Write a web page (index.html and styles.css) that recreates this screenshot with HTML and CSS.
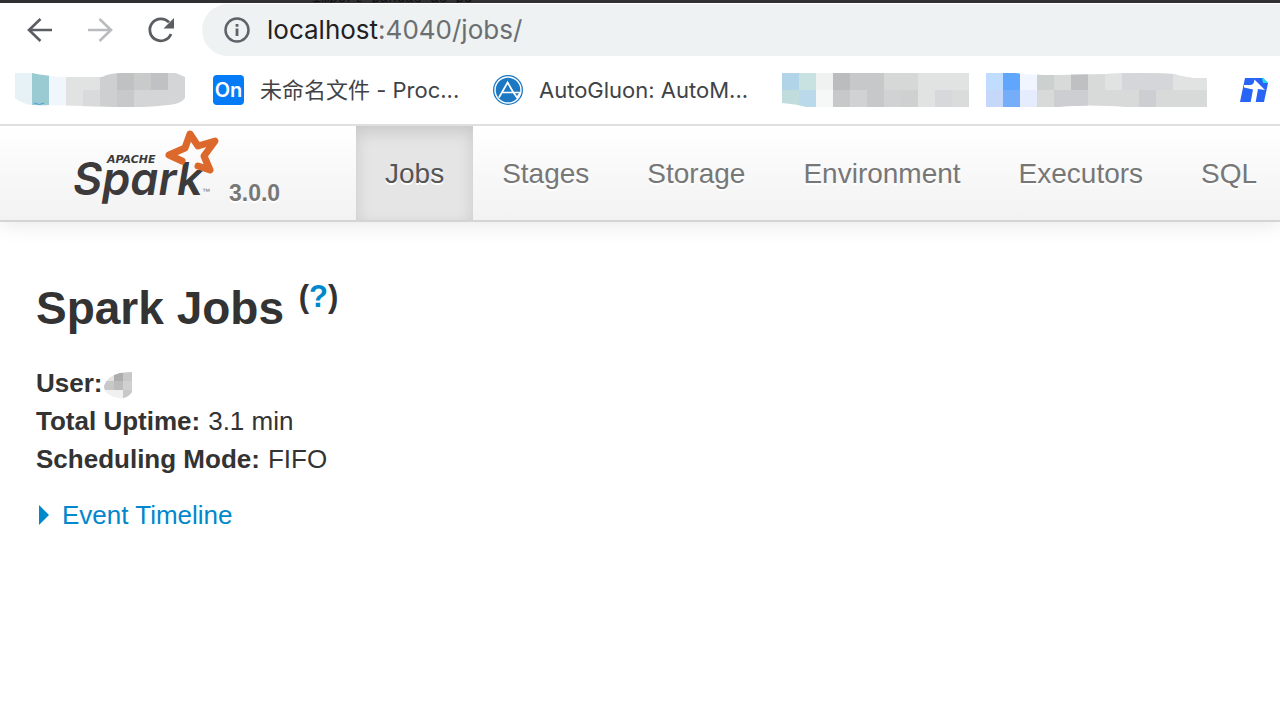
FILE: index.html
```html
<!DOCTYPE html>
<html lang="en">
<head>
<meta charset="utf-8">
<title>Spark Jobs</title>
<link rel="stylesheet" href="styles.css">
</head>
<body>
<div class="backdrop"><span>import</span> pandas as pd</div>
<header class="browser">
  <div class="toolbar">
    <button class="tool" aria-label="Back"><svg width="32" height="32" viewBox="0 0 32 32"><path d="M28 16H5M16.500 5 5 16l11.500 11" fill="none" stroke="#5a5e63" stroke-width="2.600"/></svg></button>
    <button class="tool" aria-label="Forward"><svg width="32" height="32" viewBox="0 0 32 32"><path d="M4 16h23M15.500 5 27 16 15.500 27" fill="none" stroke="#b9bbbe" stroke-width="2.600"/></svg></button>
    <button class="tool" aria-label="Reload"><svg width="32" height="32" viewBox="0 0 32 32"><path d="M27 20A11 11 0 1 1 25 8.400" fill="none" stroke="#5a5e63" stroke-width="2.800"/><path d="M30 4v10.500H19.500z" fill="#5a5e63"/></svg></button>
    <div class="address">
      <svg width="28" height="28" viewBox="0 0 28 28"><circle cx="14" cy="14" r="11.500" fill="none" stroke="#5f6368" stroke-width="2.500"/><path d="M14 12.500V20M14 8v2.800" stroke="#5f6368" stroke-width="2.800"/></svg>
      <div class="url" role="textbox" aria-label="Address" contenteditable="true" spellcheck="false"><span class="host">localhost</span>:4040/jobs/</div>
    </div>
  </div>
  <nav class="bookmarks" aria-label="Bookmarks">
    <a class="bookmark hidden-one" href="#" aria-label="Bookmark">
      <svg width="170" height="34" viewBox="0 0 170 34"><defs><clipPath id="m1"><path d="M0 0h17q14 3 34 4h36q8-4 19-4h55l9 4v21q-4 6-17 7-24 3-53 2l-66-2q-25 2-34-7z"/></clipPath></defs><g clip-path="url(#m1)"><path fill="#e6f2f5" d="M0 0h17v34H0z"/><path fill="#9acbd3" d="M17 0h17v34H17z"/><path fill="#f0f6fc" d="M34 0h17v34H34z"/><path fill="#e1e3e3" d="M51 0h34v34H51z"/><path fill="#d8dadb" d="M68 17h17v17H68z"/><path fill="#cecfd0" d="M85 0h17v34H85z"/><path fill="#c0c1c3" d="M102 0h17v17h-17z"/><path fill="#c8c9cb" d="M102 17h17v17h-17z"/><path fill="#c9cbcb" d="M119 0h17v17h-17z"/><path fill="#d4d5d6" d="M119 17h51v17h-51zM153 0h17v17h-17z"/><path fill="#c0c1c3" d="M136 0h17v17h-17z"/></g><path d="M19 30q6 3 10 0" stroke="#4c9ed5" fill="none"/></svg>
    </a>
    <a class="bookmark procession" href="#">
      <span class="on-icon">On</span><span>未命名文件 - Proc...</span>
    </a>
    <a class="bookmark gluon" href="#">
      <svg width="32" height="32" viewBox="0 0 32 32"><circle cx="16" cy="16" r="15" fill="#1c78c3"/><circle cx="16" cy="16" r="13" fill="none" stroke="#fff" stroke-width="1.400"/><path d="m7 23.500 8.600-15 5.800 10M10.500 18.500H29M21.400 18.500l3.600 5 3.500-5" fill="none" stroke="#fff" stroke-width="1.700"/></svg><span>AutoGluon: AutoM...</span>
    </a>
    <a class="bookmark grey-one" href="#" aria-label="Bookmark">
      <svg width="187" height="34" viewBox="0 0 187 34"><defs><clipPath id="m2"><path d="M0 0h187v34H24Q14 31 0 30z"/></clipPath></defs><g clip-path="url(#m2)"><path fill="#b1d4e8" d="M0 0h17v17H0z"/><path fill="#c8e1e1" d="M17 0h17v17H17z"/><path fill="#c0dcdd" d="M0 17h17v17H0z"/><path fill="#badaeb" d="M17 17h17v17H17z"/><path fill="#eff2f1" d="M34 0h17v17H34z"/><path fill="#f5f8f7" d="M34 17h17v17H34z"/><path fill="#bbbcbe" d="M51 0h17v17H51z"/><path fill="#c7c8ca" d="M51 17h17v17H51zM68 0h17v17H68zM85 0h17v34H85z"/><path fill="#d1d2d4" d="M68 17h17v17H68zM102 17h17v17h-17z"/><path fill="#d6d8d8" d="M102 0h34v17h-34z"/><path fill="#cfd1d1" d="M119 17h17v17h-17z"/><path fill="#e1e3e3" d="M136 0h51v17h-51zM136 17h17v17h-17z"/><path fill="#d7d8dc" d="M153 17h17v17h-17z"/><path fill="#d9dcdb" d="M170 17h17v17h-17z"/></g></svg>
    </a>
    <a class="bookmark blue-one" href="#" aria-label="Bookmark">
      <svg width="221" height="34" viewBox="0 0 221 34"><defs><clipPath id="m3"><path d="M0 0h30q12 2 40 2l50-1q35-2 68 0 13 5 33 4v29H140q-40-3-68 0H0z"/></clipPath></defs><g clip-path="url(#m3)"><path fill="#c0dcff" d="M0 0h17v17H0z"/><path fill="#c6d8f9" d="M0 17h17v17H0z"/><path fill="#60a6fc" d="M17 0h17v17H17z"/><path fill="#75adf8" d="M17 17h17v17H17z"/><path fill="#f0f5ff" d="M34 0h17v17H34z"/><path fill="#e5ecfd" d="M34 17h17v17H34z"/><path fill="#d8dada" d="M51 0h170v34H51z"/><path fill="#ccd0cf" d="M51 0h17v17H51z"/><path fill="#bfc0c2" d="M85 0h17v17H85z"/><path fill="#cdced1" d="M68 17h34v17H68zM153 17h17v17h-17z"/><path fill="#e0e3e2" d="M119 0h17v17h-17zM187 0h34v17h-34z"/><path fill="#d5d6d9" d="M136 0h51v17h-51z"/></g></svg>
    </a>
    <a class="bookmark last-one" href="#" aria-label="Documents">
      <svg width="30" height="28" viewBox="0 0 30 28"><path d="M6 2h18l5 5-4 19H1z" fill="#2864f5"/><path d="M23 2h1l5 5h-5z" fill="#1de1ef"/><path d="M15.500 3.500 26 14l-7-1-2.500 14h-5L14 13.500 5 11.500V9h6q4 0 4.500-5.500z" fill="#fff"/></svg>
    </a>
  </nav>
</header>
<nav class="navbar" aria-label="Spark">
  <a class="brand" href="#">
    <svg width="148" height="80" viewBox="0 0 148 80" role="img" aria-label="Apache Spark">
      <text class="logo-word" x="0" y="67">Spark</text>
      <path d="M109 33 96 27 112 20 117 6 125 18 142 13 131 28 137 42 125 38" fill="none" stroke="#dc692b" stroke-width="7" stroke-linecap="round" stroke-linejoin="round"/>
      <text class="logo-top" x="34" y="35">APACHE</text>
      <text class="logo-mark" x="129" y="66">™</text>
    </svg>
    <span class="version">3.0.0</span>
  </a>
  <a class="tab active" href="#">Jobs</a>
  <a class="tab" href="#">Stages</a>
  <a class="tab" href="#">Storage</a>
  <a class="tab" href="#">Environment</a>
  <a class="tab" href="#">Executors</a>
  <a class="tab" href="#">SQL</a>
</nav>
<main class="content">
  <h1>Spark Jobs <sup>(<a href="#">?</a>)</sup></h1>
  <ul class="summary">
    <li><strong>User:</strong><svg class="user" width="29" height="28" viewBox="0 0 29 28"><defs><clipPath id="m4"><path d="M29 1v20q-5 7-12 6Q1 24 1 15 4 5 17 2z"/></clipPath></defs><g clip-path="url(#m4)"><path fill="#e3e3e3" d="M0 0h29v28H0z"/><path fill="#adadad" d="M11 0h9v10h-9z"/><path fill="#c8c8c8" d="M20 0h9v10h-9zM0 10h11v9H0zM20 19h9v9h-9z"/><path fill="#bcbcbc" d="M11 10h9v9h-9z"/><path fill="#d0d0d0" d="M20 10h9v9h-9z"/><path fill="#f0f0f0" d="M0 19h20v9H0z"/></g></svg></li>
    <li><strong>Total Uptime:</strong> 3.1 min</li>
    <li><strong>Scheduling Mode:</strong> FIFO</li>
  </ul>
  <a class="timeline" href="#"><svg width="11" height="20" viewBox="0 0 11 20"><path d="M1 0 11 10 1 20z" fill="#0088cc"/></svg>Event Timeline</a>
</main>
</body>
</html>
```
FILE: styles.css
```css
* { box-sizing: border-box; }
body {
  margin: 0;
  background: #fff;
  color: #333;
  font: 26px/38px "Liberation Sans", Arial, sans-serif;
  overflow-x: hidden;
}
a { color: #0088cc; text-decoration: none; }
svg { display: block; flex: none; }
.backdrop {
  display: flex;
  align-items: flex-end;
  gap: 8px;
  height: 3px;
  padding-left: 313px;
  overflow: hidden;
  background: #302f32;
  color: #111;
  font: 14px/9px "Liberation Mono", monospace;
}
.backdrop span { font-style: italic; }
.browser {
  position: relative;
  z-index: 1;
  border-bottom: 2px solid #dfdfdf;
  background: #fff;
}
.toolbar {
  display: flex;
  align-items: center;
  gap: 28px;
  height: 53px;
  padding-left: 24px;
}
.tool { padding: 0; border: 0; background: none; }
.address {
  display: flex;
  flex: 1;
  align-items: center;
  gap: 16px;
  height: 52px;
  margin-left: -2px;
  padding-left: 21px;
  border-radius: 26px 0 0 26px;
  background: #eef2f3;
}
.url {
  color: #6b6e70;
  font: 26px/40px Inter, sans-serif;
  white-space: nowrap;
  outline: 0;
}
.host { color: #1f2124; }
.bookmarks {
  display: flex;
  align-items: center;
  height: 68px;
  padding-left: 15px;
}
.bookmark {
  display: flex;
  flex: none;
  align-items: center;
  color: #3f4347;
  font: 22px/32px Inter, "Noto Sans CJK SC", sans-serif;
  white-space: nowrap;
}
.hidden-one { width: 198px; }
.procession { width: 279px; gap: 16px; }
.gluon { width: 290px; gap: 15px; }
.grey-one { width: 204px; }
.blue-one { width: 253px; }
.on-icon {
  width: 31px;
  height: 30px;
  border-radius: 4px;
  background: #057bf5;
  color: #fff;
  font: 600 20px/31px Inter, sans-serif;
  text-align: center;
}
.navbar {
  display: flex;
  height: 96px;
  border-bottom: 2px solid #d4d4d4;
  background: linear-gradient(#fff, #f2f2f2);
  box-shadow: 0 2px 20px rgba(0, 0, 0, 0.1);
}
.brand {
  display: flex;
  flex: none;
  gap: 8px;
  width: 356px;
  padding: 2px 0 0 73px;
}
.version {
  padding-top: 46px;
  color: #777;
  font-size: 23px;
  font-weight: bold;
  text-shadow: 0 2px 0 #fff;
}
.logo-word { fill: #3c3a3a; font: italic 600 45px Inter, sans-serif; }
.logo-top { fill: #3c3a3a; font: italic bold 11px "DejaVu Sans", sans-serif; }
.logo-mark { fill: #777; font: 8px "Liberation Sans", sans-serif; }
.tab {
  flex: none;
  padding: 0 29px;
  color: #777;
  font-size: 28px;
  line-height: 96px;
  text-shadow: 0 2px 0 #fff;
}
.tab.active {
  background: #e5e5e5;
  color: #555;
  box-shadow: inset 0 6px 16px rgba(0, 0, 0, 0.13);
}
.content { padding: 48px 36px; }
h1 {
  margin: 0 0 18px;
  font-size: 46px;
  line-height: 76px;
}
sup { margin-left: 2px; font-size: 31px; line-height: 0; vertical-align: 17px; }
.summary { margin: 0; padding: 0; list-style: none; }
.summary li { display: flex; gap: 8px; }
.user { margin: 7px 0 0 -7px; }
.timeline {
  display: flex;
  align-items: center;
  gap: 13px;
  width: fit-content;
  margin-top: 18px;
  padding-left: 2px;
}
```
